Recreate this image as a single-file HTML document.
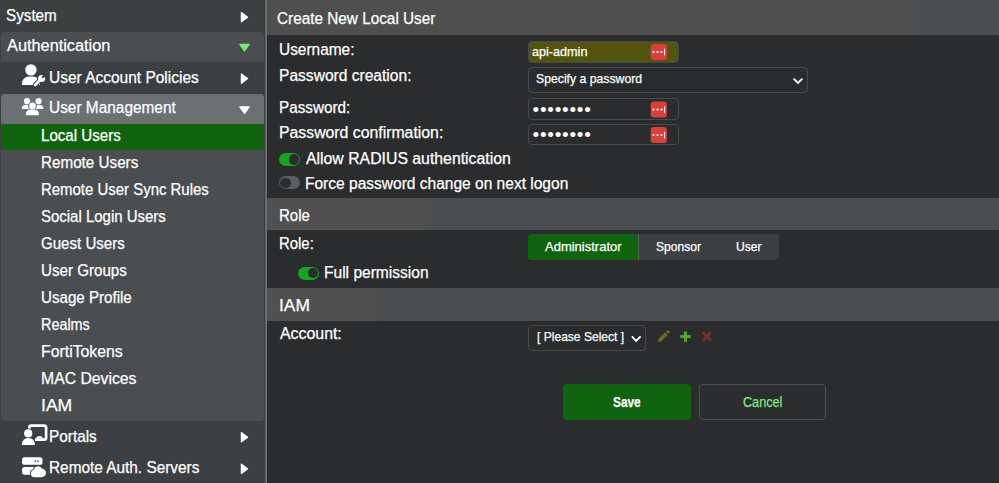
<!DOCTYPE html>
<html lang="en">
<head>
<meta charset="utf-8">
<title>Create New Local User</title>
<style>
*{box-sizing:border-box;margin:0;padding:0}
html,body{width:999px;height:483px;overflow:hidden;background:#2b2c2e;font-family:"Liberation Sans",sans-serif;color:#fff}
body{position:relative}
.a{position:absolute}
.t{position:absolute;white-space:nowrap;line-height:1;transform-origin:0 0;-webkit-text-stroke:0.250px currentColor}
#side{left:0;top:0;width:265px;height:483px;background:#3c4042}
#sysrow{left:0;top:0;width:265px;height:32px;background:#3d4041}
#authrow{left:1px;top:32px;width:263px;height:30px;background:#4a4e50;border-radius:4px 4px 0 0}
#sub1{left:1px;top:62px;width:263px;height:32px;background:#3b3f41}
#umrow{left:1px;top:93.500px;width:263px;height:31px;background:#6c7073;border-radius:4px 4px 0 0}
#sel{left:1px;top:124px;width:263px;height:26.300px;background:#106410}
#sublist{left:1px;top:150.300px;width:263px;height:270.700px;background:#4a4e50;border-radius:0 0 4px 4px}
#vbar{left:264.600px;top:0;width:2.400px;height:483px;background:linear-gradient(90deg,#5f5c59,#7a7571)}
#hdr{left:267px;top:0;width:732px;height:35px;background:linear-gradient(90deg,#4f4f4f 652px,#4b4f51 654px)}
#rolehdr{left:267px;top:198px;width:732px;height:32px;background:linear-gradient(90deg,#505050 163px,#4a4e50 165px)}
#iamhdr{left:267px;top:288px;width:732px;height:32.700px;background:linear-gradient(90deg,#505050 109px,#4a4e50 111px)}
.pw{position:absolute;white-space:nowrap;line-height:1;font-size:19px;letter-spacing:0.720px}
.inp{border:1px solid #454b4e;border-radius:4px;background:#2b2c2e}
.red{background:#d9403c;border-radius:3px;width:16px;height:16px}
.tog{width:21.200px;height:13px;border-radius:6.500px}
.tog i{position:absolute;top:1.200px;width:10.600px;height:10.600px;border-radius:50%;background:#2b2c2e}
.on{background:#16a521}.on i{right:1.100px}
.off{background:#5a5e62}.off i{left:1.100px}
</style>
</head>
<body>
<div id="side" class="a"></div>
<div id="sysrow" class="a"></div>
<div id="authrow" class="a"></div>
<div id="sub1" class="a"></div>
<div id="umrow" class="a"></div>
<div id="sel" class="a"></div>
<div id="sublist" class="a"></div>
<div id="vbar" class="a"></div>
<div id="hdr" class="a"></div>
<div id="rolehdr" class="a"></div>
<div id="iamhdr" class="a"></div>

<!-- sidebar arrows + icons -->
<svg class="a" style="left:0;top:0" width="265" height="483" viewBox="0 0 265 483">
  <path d="M241.400 12.6 L247.600 17.2 L241.400 21.8Z" fill="#fff" stroke="#fff" stroke-width="1.300" stroke-linejoin="round"/>
  <path d="M239.800 44.3 L249.200 44.3 L244.500 50.9Z" fill="#78e878" stroke="#78e878" stroke-width="1.300" stroke-linejoin="round"/>
  <path d="M241.400 74.0 L247.600 78.6 L241.400 83.2Z" fill="#fff" stroke="#fff" stroke-width="1.300" stroke-linejoin="round"/>
  <path d="M239.800 106.8 L249.200 106.8 L244.500 113.4Z" fill="#fff" stroke="#fff" stroke-width="1.300" stroke-linejoin="round"/>
  <path d="M241.400 432.6 L247.600 437.2 L241.400 441.8Z" fill="#fff" stroke="#fff" stroke-width="1.300" stroke-linejoin="round"/>
  <path d="M241.400 464.2 L247.600 468.8 L241.400 473.4Z" fill="#fff" stroke="#fff" stroke-width="1.300" stroke-linejoin="round"/>
  <!-- user + wrench -->
  <g>
    <circle cx="30.9" cy="69.9" r="5.7" fill="#fff"/>
    <path d="M21.9 85 v-1.400 a7.200 7.200 0 0 1 7.200 -7.200 h3.600 a7.200 7.200 0 0 1 7.200 7.200 v1.400Z" fill="#fff"/>
    <line x1="35.2" y1="85" x2="40.8" y2="79.200" stroke="#3b3f41" stroke-width="4.800" stroke-linecap="round"/>
    <circle cx="41.600" cy="78.400" r="4.500" fill="#3b3f41"/>
    <line x1="35.2" y1="85" x2="40.8" y2="79.200" stroke="#fff" stroke-width="2.900" stroke-linecap="round"/>
    <circle cx="41.600" cy="78.400" r="3.500" fill="#fff"/>
    <line x1="42.300" y1="77.700" x2="46.500" y2="73.500" stroke="#3b3f41" stroke-width="2.300"/>
  </g>
  <!-- users -->
  <g fill="#fff">
    <circle cx="27" cy="101.200" r="3.100"/>
    <circle cx="38.600" cy="101.200" r="3.100"/>
    <path d="M21.800 108.900 v-.500 a3.500 3.500 0 0 1 3.500 -3.500 h3.400 a3.500 3.500 0 0 1 3.500 3.500 v.500Z"/>
    <path d="M43.300 108.900 v-.500 a3.500 3.500 0 0 0 -3.500 -3.500 h-3.400 a3.500 3.500 0 0 0 -3.500 3.500 v.500Z"/>
    <circle cx="32.500" cy="105.900" r="4.400" fill="#6c7073"/>
    <circle cx="32.500" cy="105.900" r="3.300"/>
    <path d="M25.800 114.500 v-.800 a4.300 4.300 0 0 1 4.300 -4.300 h4.500 a4.300 4.300 0 0 1 4.300 4.300 v.800 a.8 .8 0 0 1 -.8 .8 h-11.500 a.8 .8 0 0 1 -.8 -.8Z"/>
  </g>
  <!-- portals -->
  <g>
    <path d="M29.300 430 V427.700 a2 2 0 0 1 2 -2 H44.100 a2 2 0 0 1 2 2 V437.700 a2 2 0 0 1 -2 2 H35" fill="none" stroke="#fff" stroke-width="2.700"/>
    <path d="M36.200 438.600 a3.300 2.600 0 0 1 6.600 0Z" fill="#fff"/>
    <circle cx="28.200" cy="433.400" r="5" fill="#3c4042"/>
    <circle cx="28.200" cy="433.400" r="4.100" fill="#fff"/>
    <path d="M21.900 444.900 v-.900 a6 6 0 0 1 6 -6 h1 a6 6 0 0 1 6 6 v.900Z" fill="#fff" stroke="#3c4042" stroke-width="0.900" paint-order="stroke"/>
  </g>
  <!-- servers + cloud -->
  <g fill="#fff">
    <rect x="22" y="457.300" width="20.500" height="7.500" rx="2.600"/>
    <circle cx="35.400" cy="461.100" r="0.850" fill="#4a4a60"/>
    <circle cx="38.100" cy="461.100" r="0.850" fill="#4a4a60"/>
    <rect x="22" y="467" width="14" height="7.700" rx="2.600"/>
    <path d="M34.400 477.200 a3.700 3.700 0 0 1 -.8 -7.300 a4.500 4.500 0 0 1 8.300 -1.300 a4.300 4.300 0 0 1 -0.400 8.600Z" stroke="#3c4042" stroke-width="1.600" paint-order="stroke"/>
  </g>
</svg>

<!-- inputs -->
<div class="a inp" style="left:528px;top:41px;width:151px;height:22px;background:#53540d;border-color:#454a4c"></div>
<div class="a inp" style="left:528px;top:67px;width:280px;height:26px"></div>
<div class="a inp" style="left:528px;top:98px;width:151px;height:22px"></div>
<div class="a inp" style="left:528px;top:123.700px;width:151px;height:21.700px"></div>
<div class="a inp" style="left:528px;top:325px;width:118px;height:26px"></div>

<!-- role buttons -->
<div class="a" style="left:528px;top:234px;width:251px;height:26px;background:#3c4042;border-radius:4px"></div>
<div class="a" style="left:528px;top:234px;width:111px;height:26px;background:#106410;border-radius:4px 0 0 4px;border-right:1px solid #4f6a50"></div>

<!-- toggles -->
<div class="a tog on" style="left:279px;top:152.800px"><i></i></div>
<div class="a tog off" style="left:279px;top:176.400px"><i></i></div>
<div class="a tog on" style="left:298.300px;top:266.700px"><i></i></div>

<!-- buttons -->
<div class="a" style="left:562.800px;top:384px;width:127.900px;height:36px;background:#106410;border-radius:4px"></div>
<div class="a" style="left:698.600px;top:384px;width:127.800px;height:36px;border:1px solid #4b5053;border-radius:4px"></div>

<!-- small glyphs: red icons, pw dots, chevrons, edit icons -->
<svg class="a" style="left:500px;top:30px" width="499" height="330" viewBox="500 30 499 330">
  <g id="r1">
    <rect x="650.7" y="44" width="16.2" height="16" rx="3" fill="#d9403c"/>
    <circle cx="653.5" cy="52" r="1.1" fill="#fff"/><circle cx="657.5" cy="52" r="1.1" fill="#fff"/><circle cx="661.5" cy="52" r="1.1" fill="#fff"/>
    <rect x="664" y="48.8" width="1.1" height="6.4" fill="#fff"/>
  </g>
  <g transform="translate(0,57.6)">
    <rect x="650.7" y="44" width="16.2" height="16" rx="3" fill="#d9403c"/>
    <circle cx="653.5" cy="52" r="1.1" fill="#fff"/><circle cx="657.5" cy="52" r="1.1" fill="#fff"/><circle cx="661.5" cy="52" r="1.1" fill="#fff"/>
    <rect x="664" y="48.8" width="1.1" height="6.4" fill="#fff"/>
  </g>
  <g transform="translate(0,83)">
    <rect x="650.7" y="44" width="16.2" height="16" rx="3" fill="#d9403c"/>
    <circle cx="653.5" cy="52" r="1.1" fill="#fff"/><circle cx="657.5" cy="52" r="1.1" fill="#fff"/><circle cx="661.5" cy="52" r="1.1" fill="#fff"/>
    <rect x="664" y="48.8" width="1.1" height="6.4" fill="#fff"/>
  </g>
  <path d="M793.6 78.6 L798 83 L802.4 78.6" fill="none" stroke="#fff" stroke-width="1.9"/>
  <path d="M631.8 336.4 L636.2 340.8 L640.6 336.4" fill="none" stroke="#fff" stroke-width="1.9"/>
  <!-- pencil -->
  <g fill="#79651f">
    <path d="M657.8 342.2 l.8 -3.4 l6.6 -6.600 l2.600 2.600 l-6.600 6.600Z"/>
    <path d="M666 331.400 l1 -1 a1 1 0 0 1 1.400 0 l1.200 1.200 a1 1 0 0 1 0 1.400 l-1 1Z"/>
  </g>
  <path d="M685.500 331.400 v10.400 M680.300 336.600 h10.400" stroke="#5ba22c" stroke-width="3" fill="none"/>
  <path d="M702.800 332.200 l8 8.600 M710.800 332.200 l-8 8.600" stroke="#733232" stroke-width="2.900" fill="none"/>
</svg>

<span class="pw" style="left:532.550px;top:100px">••••••••</span>
<span class="pw" style="left:532.550px;top:125px">••••••••</span>
<span class="t" style="left:6.40px;top:8px;font-size:16px;transform:scaleX(0.9519)">System</span>
<span class="t" style="left:7.13px;top:38px;font-size:16px;transform:scaleX(1.0196)">Authentication</span>
<span class="t" style="left:49.38px;top:70px;font-size:16px;transform:scaleX(0.9680)">User Account Policies</span>
<span class="t" style="left:49.38px;top:100px;font-size:16px;transform:scaleX(0.9633)">User Management</span>
<span class="t" style="left:40.74px;top:128px;font-size:16px;transform:scaleX(0.9443)">Local Users</span>
<span class="t" style="left:40.74px;top:155px;font-size:16px;transform:scaleX(0.9514)">Remote Users</span>
<span class="t" style="left:40.75px;top:182px;font-size:16px;transform:scaleX(0.9341)">Remote User Sync Rules</span>
<span class="t" style="left:40.75px;top:209px;font-size:16px;transform:scaleX(0.9354)">Social Login Users</span>
<span class="t" style="left:40.74px;top:236px;font-size:16px;transform:scaleX(0.9422)">Guest Users</span>
<span class="t" style="left:40.73px;top:263px;font-size:16px;transform:scaleX(0.9458)">User Groups</span>
<span class="t" style="left:40.74px;top:290px;font-size:16px;transform:scaleX(0.9452)">Usage Profile</span>
<span class="t" style="left:40.77px;top:317px;font-size:16px;transform:scaleX(0.8995)">Realms</span>
<span class="t" style="left:40.71px;top:344px;font-size:16px;transform:scaleX(0.9888)">FortiTokens</span>
<span class="t" style="left:40.71px;top:371px;font-size:16px;transform:scaleX(0.9853)">MAC Devices</span>
<span class="t" style="left:40.66px;top:398px;font-size:16px;transform:scaleX(1.0988)">IAM</span>
<span class="t" style="left:49.38px;top:429px;font-size:16px;transform:scaleX(0.9596)">Portals</span>
<span class="t" style="left:49.39px;top:460px;font-size:16px;transform:scaleX(0.9608)">Remote Auth. Servers</span>
<span class="t" style="left:277.03px;top:11px;font-size:16px;transform:scaleX(0.9576)">Create New Local User</span>
<span class="t" style="left:278.73px;top:42px;font-size:16px;transform:scaleX(0.9646)">Username:</span>
<span class="t" style="left:278.72px;top:68px;font-size:16px;transform:scaleX(0.9737)">Password creation:</span>
<span class="t" style="left:278.74px;top:100px;font-size:16px;transform:scaleX(0.9542)">Password:</span>
<span class="t" style="left:278.71px;top:125px;font-size:16px;transform:scaleX(0.9879)">Password confirmation:</span>
<span class="t" style="left:305.80px;top:151px;font-size:16px;transform:scaleX(0.9883)">Allow RADIUS authentication</span>
<span class="t" style="left:305.02px;top:176px;font-size:16px;transform:scaleX(0.9705)">Force password change on next logon</span>
<span class="t" style="left:278.73px;top:208px;font-size:16px;transform:scaleX(0.9356)">Role</span>
<span class="t" style="left:278.76px;top:236px;font-size:16px;transform:scaleX(0.9310)">Role:</span>
<span class="t" style="left:324.38px;top:265px;font-size:16px;transform:scaleX(0.9720)">Full permission</span>
<span class="t" style="left:278.66px;top:298px;font-size:16px;transform:scaleX(1.0840)">IAM</span>
<span class="t" style="left:279.79px;top:326px;font-size:16px;transform:scaleX(0.9923)">Account:</span>
<span class="t" style="left:531.57px;top:45px;font-size:13px;transform:scaleX(0.9710)">api-admin</span>
<span class="t" style="left:535.58px;top:72px;font-size:13px;transform:scaleX(0.9415)">Specify a password</span>
<span class="t" style="left:544.84px;top:240px;font-size:13px;transform:scaleX(0.9996)">Administrator</span>
<span class="t" style="left:655.88px;top:240px;font-size:13px;transform:scaleX(0.9285)">Sponsor</span>
<span class="t" style="left:735.87px;top:240px;font-size:13px;transform:scaleX(0.9309)">User</span>
<span class="t" style="left:536.83px;top:330px;font-size:13px;transform:scaleX(0.9275)">[ Please Select ]</span>
<span class="t" style="left:613.19px;top:395px;font-size:14px;transform:scaleX(0.8450);font-weight:700">Save</span>
<span class="t" style="left:742.67px;top:395px;font-size:14px;transform:scaleX(0.9020);color:#82e582">Cancel</span>
</body>
</html>
